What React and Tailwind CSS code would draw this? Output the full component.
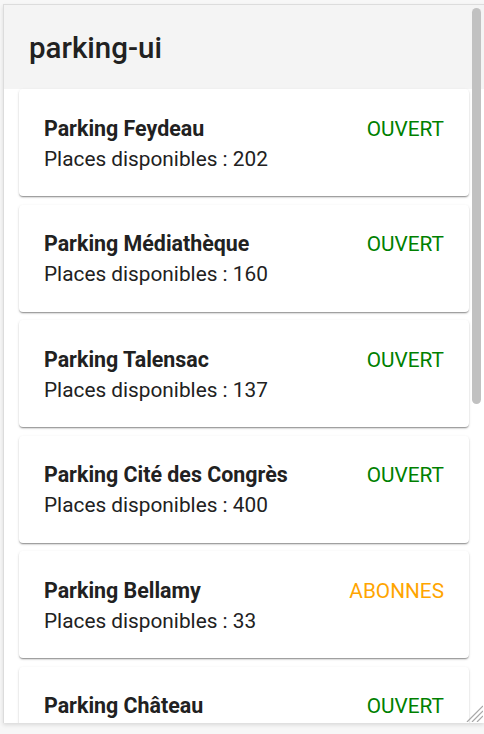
import React from "react";

const parkings = [
  { name: "Parking Feydeau", places: 202, status: "OUVERT" },
  { name: "Parking Médiathèque", places: 160, status: "OUVERT" },
  { name: "Parking Talensac", places: 137, status: "OUVERT" },
  { name: "Parking Cité des Congrès", places: 400, status: "OUVERT" },
  { name: "Parking Bellamy", places: 33, status: "ABONNES" },
  { name: "Parking Château", places: 284, status: "OUVERT" },
];

export default function App() {
  return (
    <div
      className="w-[484px] h-[734px] bg-[#f7f7f7] overflow-hidden"
      style={{ fontFamily: "Roboto, 'Noto Sans', sans-serif" }}
    >
      <div className="relative ml-[3px] mt-[4px] w-[481px] h-[719px] border-l border-t border-[#dcdcdc] shadow-[0_2px_4px_rgba(0,0,0,0.12)]">
        <div className="w-[480px] h-[718px] overflow-hidden bg-white">
          <div className="h-[84px] bg-[#f4f4f4] pl-[25px] pt-[26px]">
            <h1 className="text-[29.5px] leading-[35px] font-medium text-[#212121]">
              parking-ui
            </h1>
          </div>
          <div className="flex flex-col gap-[8.6px]">
            {parkings.map((p) => (
              <div
                key={p.name}
                className="shrink-0 ml-[15px] w-[450px] h-[107px] bg-white rounded-[4px] px-[25px] pt-[24.5px] shadow-[0_2px_2px_-1px_rgba(0,0,0,0.28),0_1px_1px_0_rgba(0,0,0,0.16),0_1px_3px_0_rgba(0,0,0,0.12)]"
              >
                <div className="flex justify-between leading-[30px]">
                  <span className="text-[21.4px] font-bold text-[#212121]">{p.name}</span>
                  <span
                    className={
                      "text-[20.8px] " +
                      (p.status === "OUVERT" ? "text-[#008000]" : "text-[#ffa500]")
                    }
                  >
                    {p.status}
                  </span>
                </div>
                <div className="text-[20.8px] leading-[30px] text-[#212121]">
                  Places disponibles : {p.places}
                </div>
              </div>
            ))}
          </div>
        </div>
        {/* scrollbar thumb */}
        <div className="absolute left-[468px] top-[3px] w-[9px] h-[396px] rounded-[5px] bg-[#c1c1c1]" />
        {/* resize grip */}
        <svg
          className="absolute right-[1px] bottom-[1px]"
          width="18"
          height="18"
          viewBox="0 0 18 18"
        >
          <line x1="2" y1="18" x2="18" y2="2" stroke="#a8a8a8" strokeWidth="1.2" />
          <line x1="7" y1="18" x2="18" y2="7" stroke="#a8a8a8" strokeWidth="1.2" />
          <line x1="12" y1="18" x2="18" y2="12" stroke="#a8a8a8" strokeWidth="1.2" />
        </svg>
      </div>
    </div>
  );
}
